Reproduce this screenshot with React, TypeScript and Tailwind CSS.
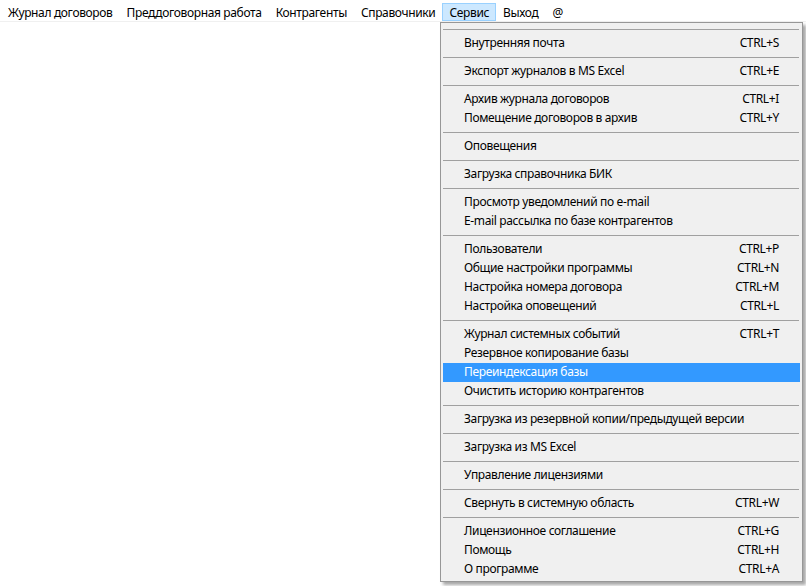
import React from "react";

type Item = { label: string; shortcut?: string; active?: boolean } | "sep";

const topMenu = [
    "Журнал договоров",
    "Преддоговорная работа",
    "Контрагенты",
    "Справочники",
    "Сервис",
    "Выход",
    "@",
];

const items: Item[] = [
    "sep",
    { label: "Внутренняя почта", shortcut: "CTRL+S" },
    "sep",
    { label: "Экспорт журналов в MS Excel", shortcut: "CTRL+E" },
    "sep",
    { label: "Архив журнала договоров", shortcut: "CTRL+I" },
    { label: "Помещение договоров в архив", shortcut: "CTRL+Y" },
    "sep",
    { label: "Оповещения" },
    "sep",
    { label: "Загрузка справочника БИК" },
    "sep",
    { label: "Просмотр уведомлений по e-mail" },
    { label: "E-mail рассылка по базе контрагентов" },
    "sep",
    { label: "Пользователи", shortcut: "CTRL+P" },
    { label: "Общие настройки программы", shortcut: "CTRL+N" },
    { label: "Настройка номера договора", shortcut: "CTRL+M" },
    { label: "Настройка оповещений", shortcut: "CTRL+L" },
    "sep",
    { label: "Журнал системных событий", shortcut: "CTRL+T" },
    { label: "Резервное копирование базы" },
    { label: "Переиндексация базы", active: true },
    { label: "Очистить историю контрагентов" },
    "sep",
    { label: "Загрузка из резервной копии/предыдущей версии" },
    "sep",
    { label: "Загрузка из MS Excel" },
    "sep",
    { label: "Управление лицензиями" },
    "sep",
    { label: "Свернуть в системную область", shortcut: "CTRL+W" },
    "sep",
    { label: "Лицензионное соглашение", shortcut: "CTRL+G" },
    { label: "Помощь", shortcut: "CTRL+H" },
    { label: "О программе", shortcut: "CTRL+A" },
];

const App: React.FC = () =>
{
    return (
        <div
            className="relative h-[586px] w-[806px] overflow-hidden bg-white text-[12px] tracking-[-0.35px] text-black"
            style={{ fontFamily: '"Noto Sans", "Open Sans", sans-serif' }}
        >
            {/* Menu bar */}
            <div className="flex h-[22px] items-stretch border-b border-[#f0f0f0] pl-[1px]">
                {topMenu.map((name) => (
                    <div
                        key={name}
                        className={
                            name === "Сервис"
                                ? "mt-[3px] flex items-center border border-[#99d1ff] bg-[#cce8ff] px-[6px] pt-[1px]"
                                : "mt-[3px] flex items-center border border-transparent px-[6px] pt-[1px]"
                        }
                    >
                        {name}
                    </div>
                ))}
            </div>

            {/* Dropdown */}
            <div className="absolute left-[440px] top-[22px] w-[363px] border border-[#979797] bg-[#f0f0f0] p-[2px] shadow-[3px_3px_3px_rgba(0,0,0,0.35)]">
                {items.map((it, i) =>
                    it === "sep" ? (
                        <div key={i} className="flex h-[9px] items-center pr-[1px]">
                            <div className="h-px w-full bg-[#a0a0a0]" />
                        </div>
                    ) : (
                        <div
                            key={i}
                            className={
                                it.active
                                    ? "flex h-[19px] items-center justify-between bg-[#3399ff] px-[21px] pb-[1px] text-white"
                                    : "flex h-[19px] items-center justify-between px-[21px] pb-[1px]"
                            }
                        >
                            <span>{it.label}</span>
                            {it.shortcut && <span>{it.shortcut}</span>}
                        </div>
                    )
                )}
            </div>
        </div>
    );
};

export default App;
